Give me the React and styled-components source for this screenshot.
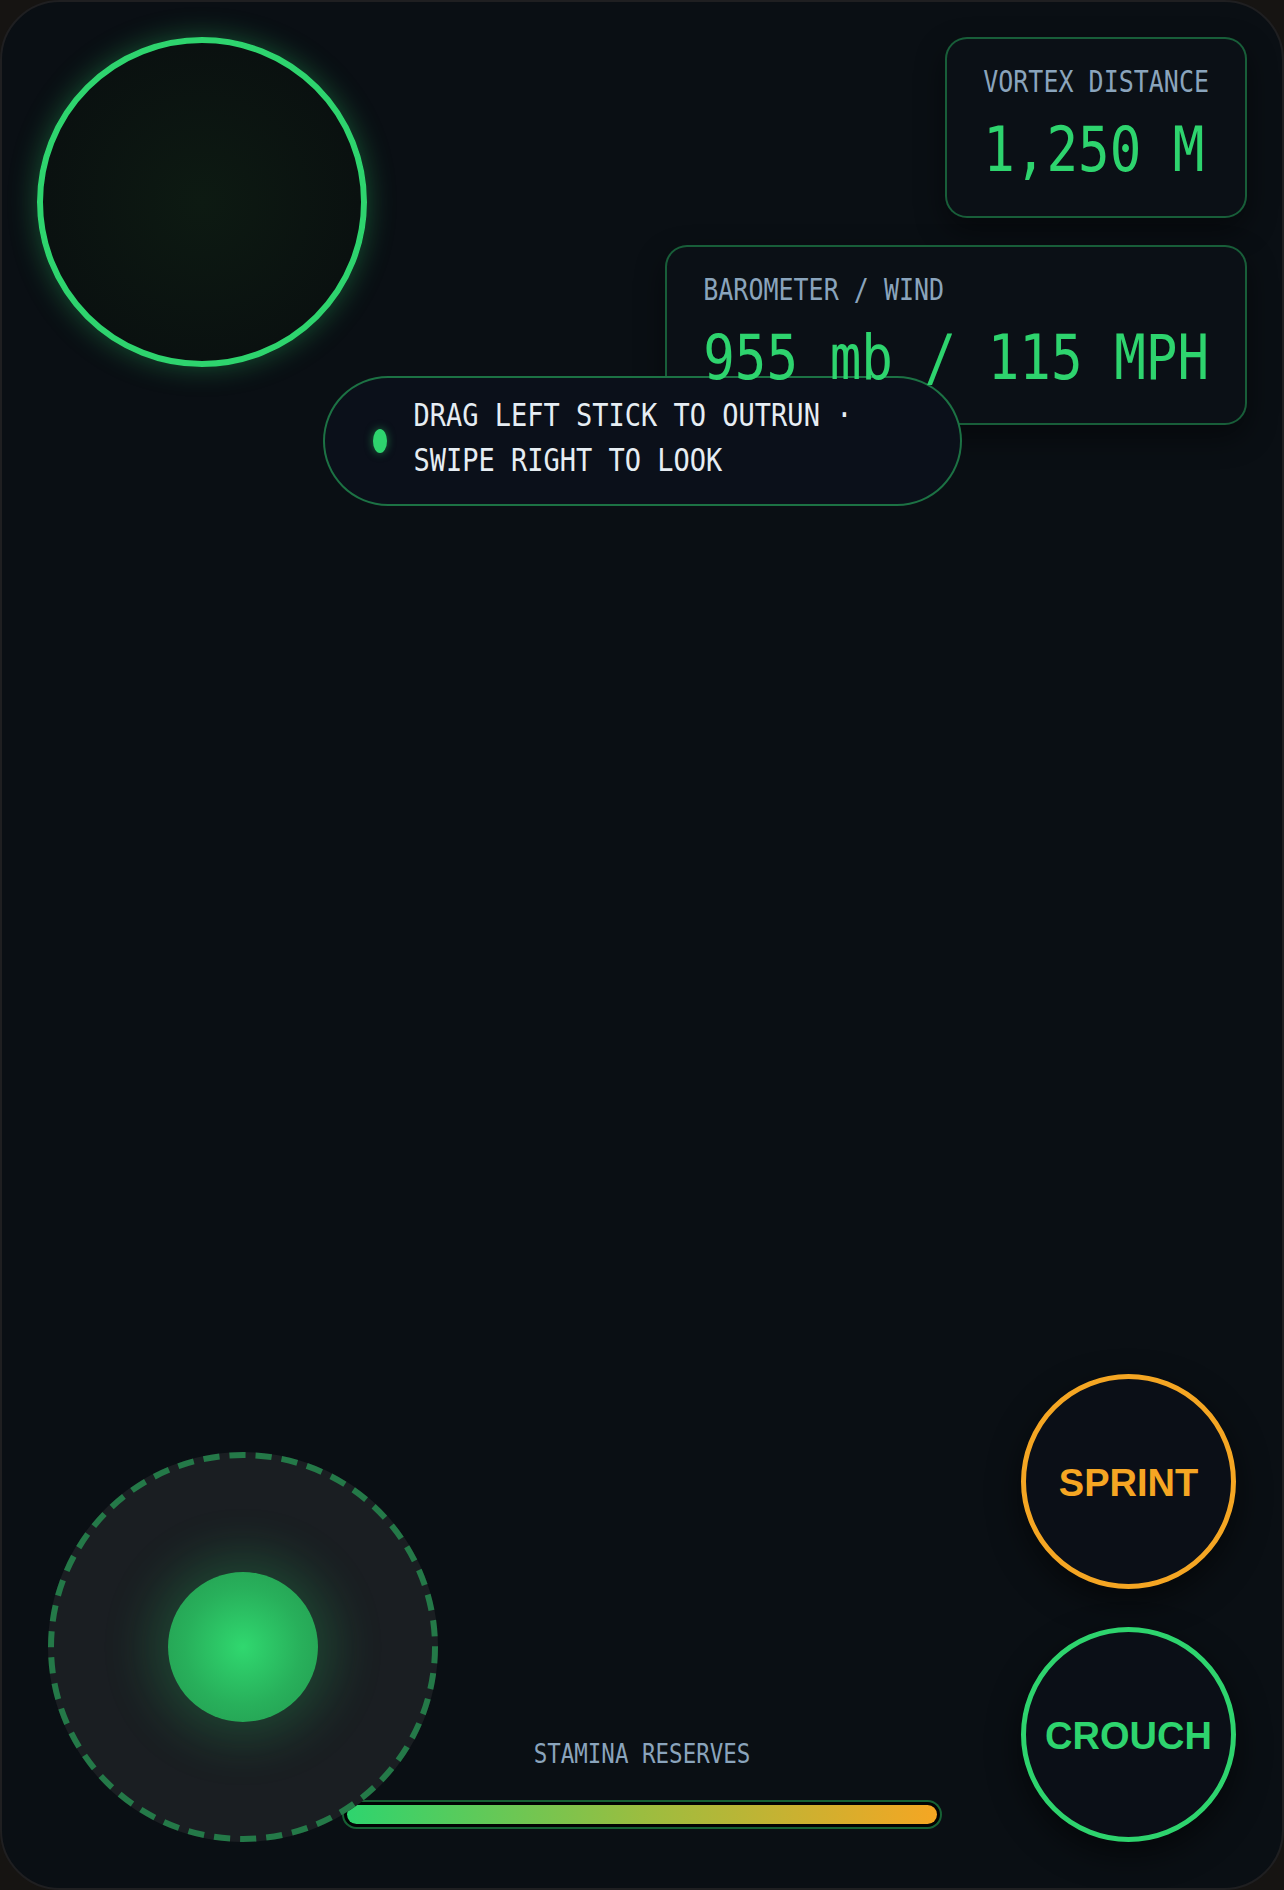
import React from "react";
import styled, { createGlobalStyle } from "styled-components";

const GREEN = "#2ed46e";
const ORANGE = "#f5a623";
const MONO = `"DejaVu Sans Mono", "Liberation Mono", monospace`;
// the HUD typeface is a tall, narrow mono; DejaVu is stretched a little to match
const TALL = "scaleY(1.18)";

const GlobalStyle = createGlobalStyle`
  html, body {
    margin: 0;
    padding: 0;
    background: #161412;
  }
  * { box-sizing: border-box; }
`;

const Frame = styled.div`
  width: 1284px;
  height: 1890px;
  border: 2px solid #1f1f21;
  border-radius: 60px;
  background: #0a0f14;
  overflow: hidden;
  display: flex;
  flex-direction: column;
`;

const Top = styled.div`
  display: grid;
  padding: 35px 35px 0;
`;

const Radar = styled.div`
  grid-area: 1 / 1;
  justify-self: start;
  align-self: start;
  width: 330px;
  height: 330px;
  border-radius: 50%;
  border: 6px solid ${GREEN};
  background: radial-gradient(circle at center, #0d1a12 0%, #0a1110 70%);
  box-shadow: 0 0 28px rgba(46, 212, 110, 0.35);
`;

const Cards = styled.div`
  grid-area: 1 / 1;
  justify-self: end;
  align-self: start;
  display: flex;
  flex-direction: column;
  align-items: flex-end;
  gap: 27px;
`;

const Card = styled.div`
  border: 2px solid rgba(46, 212, 110, 0.4);
  border-radius: 22px;
  background: #0b1016;
  padding: 30px 36px 39px;
  box-shadow: 0 12px 30px rgba(0, 0, 0, 0.45);
`;

const Label = styled.div`
  font-family: ${MONO};
  font-size: 25px;
  line-height: 1;
  color: #8aa4bc;
  white-space: nowrap;
  transform: ${TALL};
`;

const Value = styled.div`
  font-family: ${MONO};
  font-size: 52.5px;
  line-height: 1;
  margin-top: 30px;
  color: ${GREEN};
  white-space: nowrap;
  transform: ${TALL};
`;

const Hint = styled.div`
  grid-area: 1 / 1;
  justify-self: center;
  align-self: start;
  margin-top: 339px;
  width: 639px;
  height: 130px;
  border: 2px solid rgba(46, 212, 110, 0.5);
  border-radius: 70px;
  background: #0b101a;
  padding: 0 48px;
  display: flex;
  align-items: center;
  gap: 27px;
`;

const Dot = styled.span`
  flex: none;
  width: 14px;
  height: 24px;
  border-radius: 50%;
  background: ${GREEN};
  box-shadow: 0 0 8px rgba(46, 212, 110, 0.5);
`;

const HintText = styled.div`
  font-family: ${MONO};
  font-size: 27px;
  line-height: 38px;
  color: #e6edf3;
  transform: translateY(-3px) ${TALL};
`;

const Middle = styled.div`
  flex: 1;
`;

const Bottom = styled.div`
  display: grid;
  padding: 0 46px 46px;
`;

const Joystick = styled.div`
  grid-area: 1 / 1;
  justify-self: start;
  align-self: end;
  position: relative;
  width: 390px;
  height: 390px;
  border-radius: 50%;
  background: #1a1e22;
  display: flex;
  align-items: center;
  justify-content: center;
`;

const Ring = styled.svg`
  position: absolute;
  inset: 0;
`;

const Knob = styled.div`
  width: 150px;
  height: 150px;
  border-radius: 50%;
  background: radial-gradient(circle at center, #30d86f 0%, #28b05b 55%, #23994f 100%);
  box-shadow: 0 0 50px 16px rgba(46, 212, 110, 0.22);
`;

const Stamina = styled.div`
  grid-area: 1 / 1;
  justify-self: center;
  align-self: end;
  margin-bottom: 13px;
  width: 600px;
  display: flex;
  flex-direction: column;
  align-items: center;
  gap: 35px;
`;

const StaminaLabel = styled.div`
  font-family: ${MONO};
  font-size: 22.5px;
  line-height: 1;
  color: #8aa4bc;
  transform: ${TALL};
`;

const Track = styled.div`
  width: 100%;
  height: 29px;
  border: 2px solid rgba(46, 212, 110, 0.45);
  border-radius: 20px;
  background: #020304;
  padding: 3px;
`;

const Fill = styled.div`
  height: 100%;
  border-radius: 12px;
  background: linear-gradient(90deg, ${GREEN} 0%, #9bbd40 50%, ${ORANGE} 100%);
`;

const Buttons = styled.div`
  grid-area: 1 / 1;
  justify-self: end;
  align-self: end;
  display: flex;
  flex-direction: column;
  gap: 38px;
`;

const ActionButton = styled.button`
  width: 215px;
  height: 215px;
  border-radius: 50%;
  border: 5px solid ${(p) => p.$color};
  background: #0b0f17;
  color: ${(p) => p.$color};
  font-family: "Liberation Sans", Arial, sans-serif;
  font-weight: 700;
  font-size: 38px;
  padding: 4px 0 0;
  box-shadow: 0 12px 32px rgba(0, 0, 0, 0.55);
  cursor: pointer;
`;

export default function App() {
  const stamina = 100;
  return (
    <>
      <GlobalStyle />
      <Frame>
        <Top>
          <Radar />
          <Cards>
            <Card>
              <Label>VORTEX DISTANCE</Label>
              <Value>1,250 M</Value>
            </Card>
            <Card>
              <Label>BAROMETER / WIND</Label>
              <Value>955 mb / 115 MPH</Value>
            </Card>
          </Cards>
          <Hint>
            <Dot />
            <HintText>DRAG LEFT STICK TO OUTRUN · SWIPE RIGHT TO LOOK</HintText>
          </Hint>
        </Top>
        <Middle />
        <Bottom>
          <Joystick>
            <Ring viewBox="0 0 390 390">
              <circle
                cx="195"
                cy="195"
                r="192"
                fill="none"
                stroke="rgba(46, 212, 110, 0.5)"
                strokeWidth="6"
                strokeDasharray="16.2 10"
              />
            </Ring>
            <Knob />
          </Joystick>
          <Stamina>
            <StaminaLabel>STAMINA RESERVES</StaminaLabel>
            <Track>
              <Fill style={{ width: `${stamina}%` }} />
            </Track>
          </Stamina>
          <Buttons>
            <ActionButton $color={ORANGE}>SPRINT</ActionButton>
            <ActionButton $color={GREEN}>CROUCH</ActionButton>
          </Buttons>
        </Bottom>
      </Frame>
    </>
  );
}
